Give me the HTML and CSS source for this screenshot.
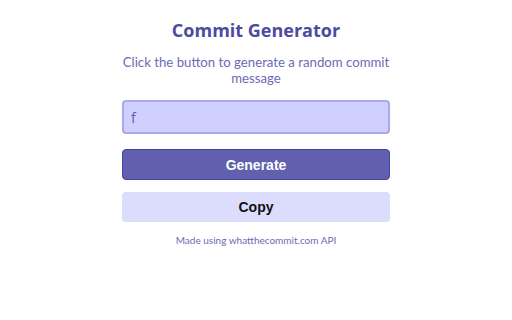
FILE: index.html
```html
<!DOCTYPE html>
<html>
<head>
<meta charset="utf-8">
<link rel="stylesheet" href="styles.css">
</head>
<body>
<main class="app">
  <h1 class="title">Commit Generator</h1>
  <p class="subtitle">Click the button to generate a random commit message</p>
  <input class="message" type="text" value="f">
  <button class="btn btn-generate">Generate</button>
  <button class="btn btn-copy">Copy</button>
  <p class="footer">Made using whatthecommit.com API</p>
</main>
</body>
</html>
```

FILE: styles.css
```css
html, body {
  margin: 0;
  padding: 0;
  background: #ffffff;
}
.app {
  width: 268px;
  margin: 0 auto;
  padding-top: 17px;
  display: flex;
  flex-direction: column;
  align-items: stretch;
  font-family: "Open Sans", "Noto Sans", sans-serif;
}
.title {
  margin: 0;
  text-align: center;
  font-size: 18px;
  line-height: 26px;
  font-weight: 700;
  color: #4b4b9f;
}
.subtitle {
  margin: 11px -4px 0;
  text-align: center;
  font-family: "Lato", "Open Sans", sans-serif;
  font-size: 13.2px;
  line-height: 16px;
  color: #6b6bb5;
}
.message {
  margin: 14px 0 0;
  box-sizing: border-box;
  height: 34px;
  width: 100%;
  padding: 0 7px;
  border: 2px solid #a8a8ec;
  border-radius: 4px;
  background: #d0d0ff;
  font-family: "Open Sans", sans-serif;
  font-size: 14px;
  color: #5a5ab0;
  outline: none;
}
.btn {
  box-sizing: border-box;
  width: 100%;
  border-radius: 4px;
  font-family: "Liberation Sans", Arial, sans-serif;
  font-weight: 700;
  font-size: 14px;
  cursor: pointer;
}
.btn-generate {
  margin-top: 15px;
  height: 31px;
  background: #6060af;
  border: 1px solid #4444a0;
  color: #ffffff;
}
.btn-copy {
  margin-top: 12px;
  height: 30px;
  background: #dcdcfd;
  border: none;
  color: #111111;
}
.footer {
  margin: 11px 0 0;
  text-align: center;
  font-family: "Lato", "Open Sans", sans-serif;
  font-size: 10px;
  line-height: 14px;
  color: #6b6bb5;
}
```
